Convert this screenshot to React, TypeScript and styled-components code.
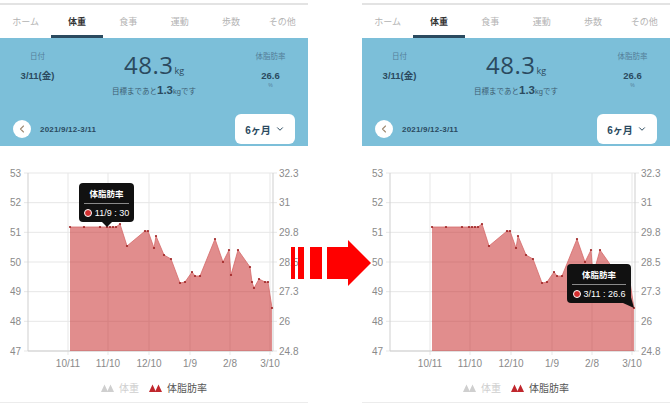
import React, { ReactElement } from 'react';
import styled, { createGlobalStyle, css } from 'styled-components';
import { ChevronLeft, ChevronDown } from 'lucide-react';

const GlobalStyle = createGlobalStyle`
  html, body {
    margin: 0;
    padding: 0;
    background: #ffffff;
    overflow: hidden;
  }
  body {
    font-family: "Liberation Sans", "Noto Sans CJK JP", sans-serif;
  }
`;

const NAVY = '#2b4a5f';
const SKY = '#7cbfd9';

const tabs = ['ホーム', '体重', '食事', '運動', '歩数', 'その他'];

// chart-space points (px inside the svg)
const points: [number, number][] = [
  [70, 67], [84, 67], [100, 67], [107, 67], [110, 67], [113, 67], [116, 67],
  [120, 64], [127, 86], [145, 71], [148, 71], [154, 88], [156, 76], [164, 95],
  [171, 99], [180, 123], [185, 122], [192, 112], [195, 116], [200, 116],
  [215, 79], [223, 102], [229, 90], [231, 115], [238, 90], [250, 107],
  [252, 122], [254, 128], [259, 119], [265, 122], [268, 122], [272, 148],
];

const leftTicks = ['53', '52', '51', '50', '49', '48', '47'];
const rightTicks = ['32.3', '31', '29.8', '28.5', '27.3', '26', '24.8'];
const xTicks: [string, number][] = [
  ['10/11', 68], ['11/10', 108], ['12/10', 149], ['1/9', 190], ['2/8', 230], ['3/10', 270],
];

const TOP = 13;
const BOTTOM = 191;
const STEP = (BOTTOM - TOP) / 6;
const AX_L = 28;
const AX_R = 273;

interface TipData {
  left: number;
  top: number;
  width: number;
  text: string;
  caret: 'center' | 'corner';
}

const Mountains = ({ color }: { color: string }) => (
  <svg width="13" height="8" viewBox="0 0 13 8">
    <polygon points="0,8 3.5,0.5 7,8" fill={color} />
    <polygon points="6,8 9.5,0.5 13,8" fill={color} />
  </svg>
);

const Chart = ({ tip }: { tip: TipData }): ReactElement => {
  const line = points.map(([x, y]) => `${x},${y}`).join(' L');
  const area = `M70,${BOTTOM} L${line} L272,${BOTTOM} Z`;

  return (
    <ChartWrap>
      <ChartSvg width="308" height="212" viewBox="0 0 308 212">
        {leftTicks.map((t, i) => {
          const y = TOP + i * STEP;
          return (
            <g key={t}>
              <line x1={AX_L - 4} x2={AX_R + 4} y1={y} y2={y} stroke="#e7e7e7" strokeWidth="1" />
              <text x={21} y={y + 3.5} textAnchor="end" fill="#8a8a8a" fontSize="10">
                {t}
              </text>
              <text x={279} y={y + 3.5} textAnchor="start" fill="#8a8a8a" fontSize="10">
                {rightTicks[i]}
              </text>
            </g>
          );
        })}
        {xTicks.map(([t, x]) => (
          <g key={t}>
            <line x1={x} x2={x} y1={TOP} y2={BOTTOM + 4} stroke="#e7e7e7" strokeWidth="1" />
            <text x={x} y={207} textAnchor="middle" fill="#8a8a8a" fontSize="10">
              {t}
            </text>
          </g>
        ))}
        <line x1={AX_L} x2={AX_L} y1={TOP} y2={BOTTOM} stroke="#cfcfcf" strokeWidth="1" />
        <line x1={AX_R} x2={AX_R} y1={TOP} y2={BOTTOM} stroke="#cfcfcf" strokeWidth="1" />
        <line x1={AX_L} x2={AX_R} y1={BOTTOM} y2={BOTTOM} stroke="#cfcfcf" strokeWidth="1" />
        <path d={area} fill="#c62828" fillOpacity="0.53" />
        <path d={`M${line}`} fill="none" stroke="#d46a6a" strokeWidth="0.8" />
        {points.map(([x, y], i) => (
          <circle key={i} cx={x} cy={y} r="1.1" fill="#9e2323" />
        ))}
      </ChartSvg>
      <Tooltip
        caret={tip.caret}
        style={{ left: tip.left, top: tip.top, width: tip.width }}
      >
        <TipTitle>体脂肪率</TipTitle>
        <TipRow>
          <TipDot />
          {tip.text}
        </TipRow>
      </Tooltip>
    </ChartWrap>
  );
};

const Phone = ({ tip }: { tip: TipData }): ReactElement => (
  <Panel>
    <TabBar>
      {tabs.map(t => (
        <Tab key={t} active={t === '体重'}>
          {t}
        </Tab>
      ))}
    </TabBar>
    <Header>
      <Stats>
        <StatCol>
          <StatLabel>日付</StatLabel>
          <StatValue>3/11(金)</StatValue>
        </StatCol>
        <StatCol>
          <BigValue>
            48.3<Unit>kg</Unit>
          </BigValue>
          <Goal>
            目標まであと<b>1.3</b>kgです
          </Goal>
        </StatCol>
        <StatCol>
          <StatLabel>体脂肪率</StatLabel>
          <StatValue>26.6</StatValue>
          <Percent>%</Percent>
        </StatCol>
      </Stats>
      <RangeRow>
        <BackButton>
          <ChevronLeft size={12} strokeWidth={2.2} color="#a08a72" />
        </BackButton>
        <RangeText>2021/9/12-3/11</RangeText>
        <PeriodBox>
          6ヶ月
          <ChevronDown size={10} strokeWidth={2.4} color={NAVY} />
        </PeriodBox>
      </RangeRow>
    </Header>
    <ChartCard>
      <Chart tip={tip} />
      <Legend>
        <LegendItem muted>
          <Mountains color="#cfcfcf" />
          体重
        </LegendItem>
        <LegendItem>
          <Mountains color="#c0272d" />
          体脂肪率
        </LegendItem>
      </Legend>
    </ChartCard>
  </Panel>
);

const App = (): ReactElement => (
  <>
    <GlobalStyle />
    <Page>
      <Phone tip={{ left: 79, top: 23, width: 55, text: '11/9 : 30', caret: 'center' }} />
      <Phone tip={{ left: 205, top: 104, width: 64, text: '3/11 : 26.6', caret: 'corner' }} />
      <Arrow width="82" height="48" viewBox="0 0 82 48">
        <rect x="1" y="8" width="4" height="32" fill="#ff0000" />
        <rect x="8" y="8" width="6" height="32" fill="#ff0000" />
        <rect x="20" y="8" width="12" height="32" fill="#ff0000" />
        <rect x="37" y="8" width="22" height="32" fill="#ff0000" />
        <polygon points="58,1 81,24 58,47" fill="#ff0000" />
      </Arrow>
    </Page>
  </>
);

const Page = styled.div`
  position: relative;
  width: 670px;
  height: 405px;
  display: flex;
  justify-content: space-between;
  overflow: hidden;
`;

const Arrow = styled.svg`
  position: absolute;
  left: 290px;
  top: 239px;
`;

const Panel = styled.div`
  width: 308px;
  height: 402px;
  display: flex;
  flex-direction: column;
  border-bottom: 1px solid #ececec;
`;

const TabBar = styled.div`
  display: grid;
  grid-template-columns: repeat(6, 1fr);
  margin-top: 3px;
  border-top: 2px solid #e3e3e3;
  height: 33px;
`;

const Tab = styled.div<{ active?: boolean }>`
  display: flex;
  align-items: center;
  justify-content: center;
  font-size: 9px;
  color: #b3b3b3;
  border-bottom: 3px solid transparent;
  padding-top: 3px;
  ${props =>
    props.active &&
    css`
      color: #333;
      font-weight: 700;
      border-bottom-color: ${NAVY};
    `}
`;

const Header = styled.div`
  background: ${SKY};
  height: 108px;
  display: flex;
  flex-direction: column;
  justify-content: space-between;
  color: ${NAVY};
`;

const Stats = styled.div`
  display: grid;
  grid-template-columns: 75px 158px 75px;
  padding-top: 14px;
`;

const StatCol = styled.div`
  display: flex;
  flex-direction: column;
  align-items: center;
`;

const StatLabel = styled.div`
  font-size: 7.5px;
  line-height: 10px;
  color: #54809a;
`;

const StatValue = styled.div`
  margin-top: 8px;
  font-size: 9.5px;
  line-height: 12px;
  font-weight: 700;
`;

const Percent = styled.div`
  font-size: 5px;
  line-height: 6px;
  color: #54809a;
`;

const BigValue = styled.div`
  font-family: "Open Sans", "Liberation Sans", sans-serif;
  font-size: 24px;
  line-height: 26px;
  font-weight: 500;
  letter-spacing: 0.5px;
`;

const Unit = styled.span`
  font-size: 9px;
  letter-spacing: 0;
  margin-left: 1px;
`;

const Goal = styled.div`
  font-size: 7.5px;
  line-height: 12px;
  color: #3d5d72;

  b {
    font-size: 11.5px;
    font-weight: 700;
    color: ${NAVY};
  }
`;

const RangeRow = styled.div`
  display: flex;
  align-items: center;
  padding: 0 13px;
  margin-bottom: 2px;
  height: 30px;
`;

const BackButton = styled.div`
  width: 18px;
  height: 18px;
  border-radius: 50%;
  background: #ffffff;
  display: flex;
  align-items: center;
  justify-content: center;
`;

const RangeText = styled.div`
  margin-left: 9px;
  font-size: 8px;
  font-weight: 700;
  letter-spacing: 0.2px;
`;

const PeriodBox = styled.div`
  margin-left: auto;
  width: 60px;
  height: 30px;
  border-radius: 6px;
  background: #ffffff;
  display: flex;
  align-items: center;
  justify-content: center;
  gap: 4px;
  font-size: 10px;
  font-weight: 700;
`;

const ChartCard = styled.div`
  flex: 1;
  display: flex;
  flex-direction: column;
  padding-top: 14px;
`;

const ChartWrap = styled.div`
  position: relative;
  height: 212px;
`;

const ChartSvg = styled.svg`
  display: block;
  font-family: "Liberation Sans", "Noto Sans CJK JP", sans-serif;
`;

const Tooltip = styled.div<{ caret: 'center' | 'corner' }>`
  position: absolute;
  box-sizing: border-box;
  height: 39px;
  background: #111111;
  border-radius: 4px;
  color: #ffffff;
  display: flex;
  flex-direction: column;
  align-items: center;
  padding: 5px 5px 0;

  &::after {
    content: '';
    position: absolute;
    ${props =>
      props.caret === 'center'
        ? css`
            left: 50%;
            bottom: -5px;
            transform: translateX(-50%);
            border-left: 5px solid transparent;
            border-right: 5px solid transparent;
            border-top: 5px solid #111111;
          `
        : css`
            right: -4px;
            bottom: -6px;
            width: 12px;
            height: 12px;
            background: #111111;
            clip-path: polygon(0 50%, 66% 0, 92% 92%);
          `}
  }
`;

const TipTitle = styled.div`
  font-size: 8.5px;
  font-weight: 700;
  line-height: 12px;
  width: 100%;
  text-align: center;
  padding-bottom: 3px;
  border-bottom: 1px solid #8a8a8a;
`;

const TipRow = styled.div`
  display: flex;
  align-items: center;
  gap: 3px;
  margin-top: 3px;
  font-size: 9px;
  line-height: 12px;
  white-space: nowrap;
`;

const TipDot = styled.span`
  width: 6px;
  height: 6px;
  border-radius: 50%;
  background: #d32f2f;
  border: 1px solid #ffffff;
`;

const Legend = styled.div`
  display: flex;
  justify-content: center;
  gap: 10px;
  margin-top: 8px;
`;

const LegendItem = styled.div<{ muted?: boolean }>`
  display: flex;
  align-items: center;
  gap: 5px;
  font-size: 10px;
  color: ${props => (props.muted ? '#cfcfcf' : '#555555')};
`;

export default App;
